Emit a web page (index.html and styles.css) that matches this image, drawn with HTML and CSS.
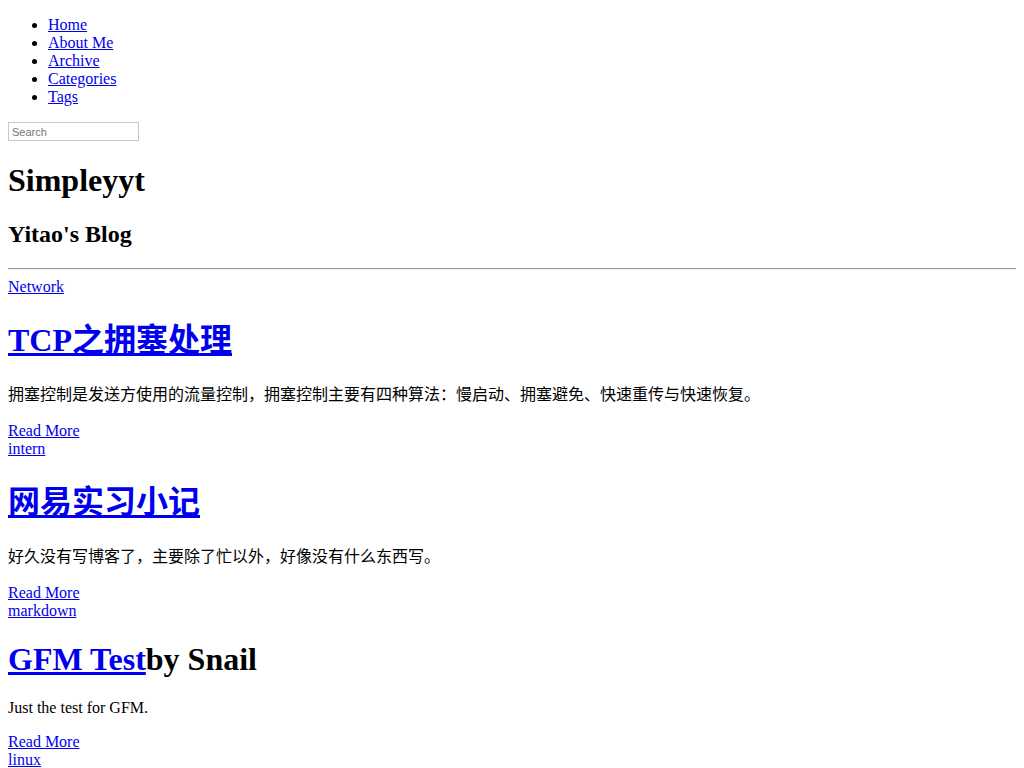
FILE: index.html
```html
<!DOCTYPE html>
<html>
<head>
<meta charset="utf-8">
<title>Simpleyyt</title>
<link rel="stylesheet" href="styles.css">
</head>
<body class="page">
<ul class="nav">
  <li><a href="#">Home</a></li>
  <li><a href="#">About Me</a></li>
  <li><a href="#">Archive</a></li>
  <li><a href="#">Categories</a></li>
  <li><a href="#">Tags</a></li>
</ul>
<form class="search"><input class="search-input" type="text" placeholder="Search"></form>
<h1 class="site-title">Simpleyyt</h1>
<h2 class="site-sub">Yitao's Blog</h2>
<hr class="rule">
<div class="post">
  <div><a href="#">Network</a></div>
  <h1 class="post-title cjk-title"><a href="#">TCP之拥塞处理</a></h1>
  <p class="post-excerpt cjk-text">拥塞控制是发送方使用的流量控制，拥塞控制主要有四种算法：慢启动、拥塞避免、快速重传与快速恢复。</p>
  <div><a href="#">Read More</a></div>
  <div><a href="#">intern</a></div>
</div>
<div class="post">
  <h1 class="post-title cjk-title"><a href="#">网易实习小记</a></h1>
  <p class="post-excerpt cjk-text">好久没有写博客了，主要除了忙以外，好像没有什么东西写。</p>
  <div><a href="#">Read More</a></div>
  <div><a href="#">markdown</a></div>
</div>
<div class="post">
  <h1 class="post-title"><a href="#">GFM Test</a>by Snail</h1>
  <p class="post-excerpt">Just the test for GFM.</p>
  <div><a href="#">Read More</a></div>
  <div><a href="#">linux</a></div>
</div>
</body>
</html>
```
FILE: styles.css
```css
.page {
  font-family: "Liberation Serif", "Noto Sans CJK SC", serif;
  font-size: 16px;
  line-height: 18px;
  margin: 0;
  padding: 8px;
}
.nav {
  margin: 8px 0 16px;
  padding-left: 40px;
}
.search {
  margin: 0;
}
.search-input {
  display: block;
  width: 131px;
  height: 19px;
  box-sizing: border-box;
  border: 1px solid #c8c8c8;
  padding: 0 3px;
  font-family: "Liberation Sans", Arial, sans-serif;
  font-size: 11px;
  margin: 0;
}
.search-input::placeholder {
  color: #757575;
}
h1 {
  font-size: 32px;
  line-height: 37px;
  margin: 21px 0;
}
h2 {
  font-size: 24px;
  line-height: 28px;
  margin: 20px 0;
}
.cjk-title {
  line-height: 46px;
}
.cjk-text {
  line-height: 22px;
}
.rule {
  margin: 8px 0;
  border: 0;
  border-top: 1px solid #9a9a9a;
  border-bottom: 1px solid #eee;
}
p {
  margin: 16px 0;
}
a {
  color: #0000ee;
}
```
